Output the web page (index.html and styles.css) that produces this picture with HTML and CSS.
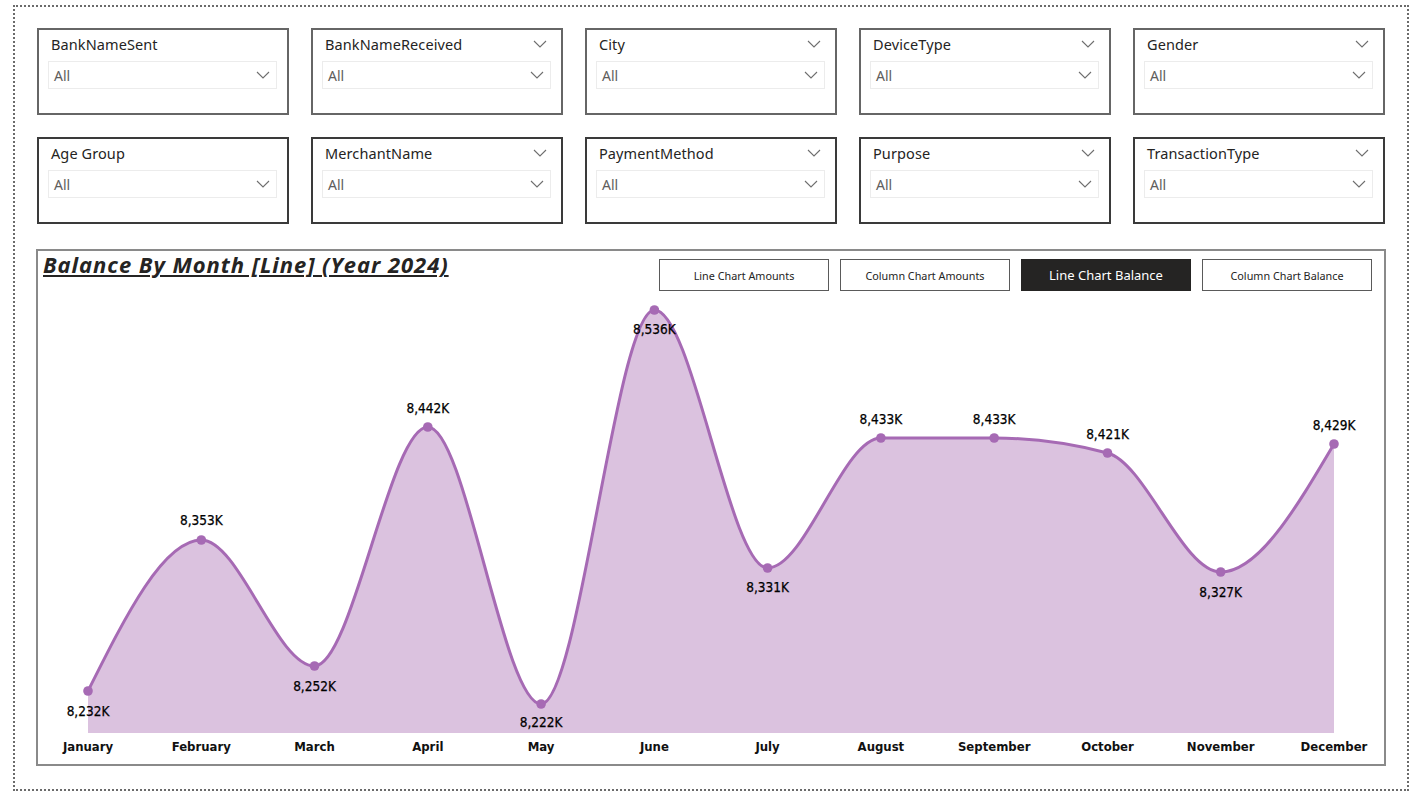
FILE: index.html
```html
<!DOCTYPE html>
<html lang="en">
<head>
<meta charset="utf-8">
<title>Balance By Month</title>
<link rel="stylesheet" href="styles.css">
</head>
<body>
<div class="page">
  <div class="slicers">
    <div class="slicer">
      <div class="slicer-head"><span class="slicer-title">BankNameSent</span></div>
      <div class="dropdown"><span>All</span><svg class="chev" viewBox="0 0 14 8"><polyline points="1,1 7,7 13,1"/></svg></div>
    </div>
    <div class="slicer">
      <div class="slicer-head"><span class="slicer-title">BankNameReceived</span><svg class="chev head-chev" viewBox="0 0 14 8"><polyline points="1,1 7,7 13,1"/></svg></div>
      <div class="dropdown"><span>All</span><svg class="chev" viewBox="0 0 14 8"><polyline points="1,1 7,7 13,1"/></svg></div>
    </div>
    <div class="slicer">
      <div class="slicer-head"><span class="slicer-title">City</span><svg class="chev head-chev" viewBox="0 0 14 8"><polyline points="1,1 7,7 13,1"/></svg></div>
      <div class="dropdown"><span>All</span><svg class="chev" viewBox="0 0 14 8"><polyline points="1,1 7,7 13,1"/></svg></div>
    </div>
    <div class="slicer">
      <div class="slicer-head"><span class="slicer-title">DeviceType</span><svg class="chev head-chev" viewBox="0 0 14 8"><polyline points="1,1 7,7 13,1"/></svg></div>
      <div class="dropdown"><span>All</span><svg class="chev" viewBox="0 0 14 8"><polyline points="1,1 7,7 13,1"/></svg></div>
    </div>
    <div class="slicer">
      <div class="slicer-head"><span class="slicer-title">Gender</span><svg class="chev head-chev" viewBox="0 0 14 8"><polyline points="1,1 7,7 13,1"/></svg></div>
      <div class="dropdown"><span>All</span><svg class="chev" viewBox="0 0 14 8"><polyline points="1,1 7,7 13,1"/></svg></div>
    </div>
    <div class="slicer dark">
      <div class="slicer-head"><span class="slicer-title">Age Group</span></div>
      <div class="dropdown"><span>All</span><svg class="chev" viewBox="0 0 14 8"><polyline points="1,1 7,7 13,1"/></svg></div>
    </div>
    <div class="slicer dark">
      <div class="slicer-head"><span class="slicer-title">MerchantName</span><svg class="chev head-chev" viewBox="0 0 14 8"><polyline points="1,1 7,7 13,1"/></svg></div>
      <div class="dropdown"><span>All</span><svg class="chev" viewBox="0 0 14 8"><polyline points="1,1 7,7 13,1"/></svg></div>
    </div>
    <div class="slicer dark">
      <div class="slicer-head"><span class="slicer-title">PaymentMethod</span><svg class="chev head-chev" viewBox="0 0 14 8"><polyline points="1,1 7,7 13,1"/></svg></div>
      <div class="dropdown"><span>All</span><svg class="chev" viewBox="0 0 14 8"><polyline points="1,1 7,7 13,1"/></svg></div>
    </div>
    <div class="slicer dark">
      <div class="slicer-head"><span class="slicer-title">Purpose</span><svg class="chev head-chev" viewBox="0 0 14 8"><polyline points="1,1 7,7 13,1"/></svg></div>
      <div class="dropdown"><span>All</span><svg class="chev" viewBox="0 0 14 8"><polyline points="1,1 7,7 13,1"/></svg></div>
    </div>
    <div class="slicer dark">
      <div class="slicer-head"><span class="slicer-title">TransactionType</span><svg class="chev head-chev" viewBox="0 0 14 8"><polyline points="1,1 7,7 13,1"/></svg></div>
      <div class="dropdown"><span>All</span><svg class="chev" viewBox="0 0 14 8"><polyline points="1,1 7,7 13,1"/></svg></div>
    </div>
  </div>

  <div class="chart-card">
    <div class="chart-head">
      <h1 class="chart-title">Balance By Month [Line] (Year 2024)</h1>
      <div class="buttons">
        <button class="btn">Line Chart Amounts</button>
        <button class="btn">Column Chart Amounts</button>
        <button class="btn active">Line Chart Balance</button>
        <button class="btn">Column Chart Balance</button>
      </div>
    </div>
    <svg class="plot" viewBox="38 295 1346 469" width="1346" height="469">
      <path class="area" d="M88,733 L88,691 C125.8,615.5 163.5,540 201.3,540 C239.1,540 276.7,666 314.5,666 C352.3,666 390,427 427.8,427 C465.6,427 503.3,704 541.1,704 C578.9,704 616.6,310 654.4,310 C692.2,310 729.8,568 767.6,568 C805.4,568 843.1,438 880.9,438 C918.7,438 956.4,438 994.2,438 C1032,438 1069.7,443 1107.5,453 C1145.3,463 1182.9,572 1220.7,572 C1258.5,572 1296.2,508 1334,444 L1334,733 Z"/>
      <path class="line" d="M88,691 C125.8,615.5 163.5,540 201.3,540 C239.1,540 276.7,666 314.5,666 C352.3,666 390,427 427.8,427 C465.6,427 503.3,704 541.1,704 C578.9,704 616.6,310 654.4,310 C692.2,310 729.8,568 767.6,568 C805.4,568 843.1,438 880.9,438 C918.7,438 956.4,438 994.2,438 C1032,438 1069.7,443 1107.5,453 C1145.3,463 1182.9,572 1220.7,572 C1258.5,572 1296.2,508 1334,444"/>
      <g class="dots">
        <circle cx="88" cy="691" r="4.8"/>
        <circle cx="201.3" cy="540" r="4.8"/>
        <circle cx="314.5" cy="666" r="4.8"/>
        <circle cx="427.8" cy="427" r="4.8"/>
        <circle cx="541.1" cy="704" r="4.8"/>
        <circle cx="654.4" cy="310" r="4.8"/>
        <circle cx="767.6" cy="568" r="4.8"/>
        <circle cx="880.9" cy="438" r="4.8"/>
        <circle cx="994.2" cy="438" r="4.8"/>
        <circle cx="1107.5" cy="453" r="4.8"/>
        <circle cx="1220.7" cy="572" r="4.8"/>
        <circle cx="1334" cy="444" r="4.8"/>
      </g>
      <g class="values">
        <text x="88" y="716">8,232K</text>
        <text x="201.3" y="525">8,353K</text>
        <text x="314.5" y="691">8,252K</text>
        <text x="427.8" y="413">8,442K</text>
        <text x="541.1" y="727">8,222K</text>
        <text x="654.4" y="334">8,536K</text>
        <text x="767.6" y="592">8,331K</text>
        <text x="880.9" y="424">8,433K</text>
        <text x="994.2" y="424">8,433K</text>
        <text x="1107.5" y="439">8,421K</text>
        <text x="1220.7" y="597">8,327K</text>
        <text x="1334" y="430">8,429K</text>
      </g>
      <g class="months">
        <text x="88" y="751">January</text>
        <text x="201.3" y="751">February</text>
        <text x="314.5" y="751">March</text>
        <text x="427.8" y="751">April</text>
        <text x="541.1" y="751">May</text>
        <text x="654.4" y="751">June</text>
        <text x="767.6" y="751">July</text>
        <text x="880.9" y="751">August</text>
        <text x="994.2" y="751">September</text>
        <text x="1107.5" y="751">October</text>
        <text x="1220.7" y="751">November</text>
        <text x="1334" y="751">December</text>
      </g>
    </svg>
  </div>
</div>
</body>
</html>
```

FILE: styles.css
```css
* { box-sizing: border-box; }
html, body { margin: 0; padding: 0; background: #ffffff; }
body { font-family: "Noto Sans", "Open Sans", sans-serif; color: #252423; }

.page {
  margin: 5px 0 0 13px;
  width: 1396px;
  height: 786px;
  border: 2px dotted #6b6b6b;
  padding: 21px 0 0 22px;
}

.slicers {
  display: grid;
  grid-template-columns: repeat(5, 252px);
  grid-auto-rows: 87px;
  column-gap: 22px;
  row-gap: 22px;
}

.slicer {
  border: 2px solid #666666;
  padding: 0 10px 0 9px;
  background: #fff;
}
.slicer.dark { border-color: #3a3a3a; }

.slicer-head {
  height: 28px;
  margin-bottom: 3px;
  display: flex;
  align-items: center;
  justify-content: space-between;
  padding-left: 3px;
}
.slicer-title {
  font-size: 14.5px;
  color: #252423;
  letter-spacing: 0.1px;
}
.chev {
  width: 14px;
  height: 8px;
  fill: none;
  stroke: #6e6e6e;
  stroke-width: 1.1;
}
.head-chev { margin-right: 4px; }

.dropdown {
  height: 28px;
  border: 1px solid #ececec;
  display: flex;
  align-items: center;
  justify-content: space-between;
  padding: 0 6px 0 5px;
  font-size: 14px;
  color: #605e5c;
}

.chart-card {
  margin-top: 25px;
  margin-left: -1px;
  width: 1350px;
  height: 517px;
  border: 2px solid #8a8a8a;
}

.chart-head {
  height: 44px;
  display: flex;
  justify-content: space-between;
  align-items: flex-start;
}

.chart-title {
  margin: 0 0 0 5px;
  font-family: "Open Sans", "Noto Sans", sans-serif;
  font-style: italic;
  font-weight: 700;
  font-size: 22px;
  line-height: 26px;
  letter-spacing: 0.95px;
  color: #252423;
  text-decoration: underline;
  text-decoration-thickness: 2px;
  text-underline-offset: 2px;
}

.buttons {
  display: flex;
  gap: 11px;
  margin-top: 8px;
  margin-right: 12px;
}
.btn {
  width: 170px;
  height: 32px;
  border: 1.5px solid #5a5a5a;
  background: #ffffff;
  font-family: "Noto Sans", "Open Sans", sans-serif;
  font-size: 10.8px;
  color: #252423;
  padding: 0;
}
.btn.active {
  background: #252423;
  border-color: #252423;
  color: #ffffff;
  font-size: 13px;
}

.plot { display: block; }
.area { fill: #dbc2df; stroke: none; }
.line { fill: none; stroke: #a66ab4; stroke-width: 3; }
.dots circle { fill: #a66ab4; }
.values text {
  font-family: "DejaVu Sans Condensed", "DejaVu Sans", sans-serif;
  font-stretch: condensed;
  font-size: 13.5px;
  fill: #000000;
  stroke: #000000;
  stroke-width: 0.25px;
  text-anchor: middle;
}
.months text {
  font-family: "DejaVu Sans Condensed", "DejaVu Sans", sans-serif;
  font-stretch: condensed;
  font-weight: 700;
  font-size: 13px;
  fill: #111111;
  text-anchor: middle;
}
```
